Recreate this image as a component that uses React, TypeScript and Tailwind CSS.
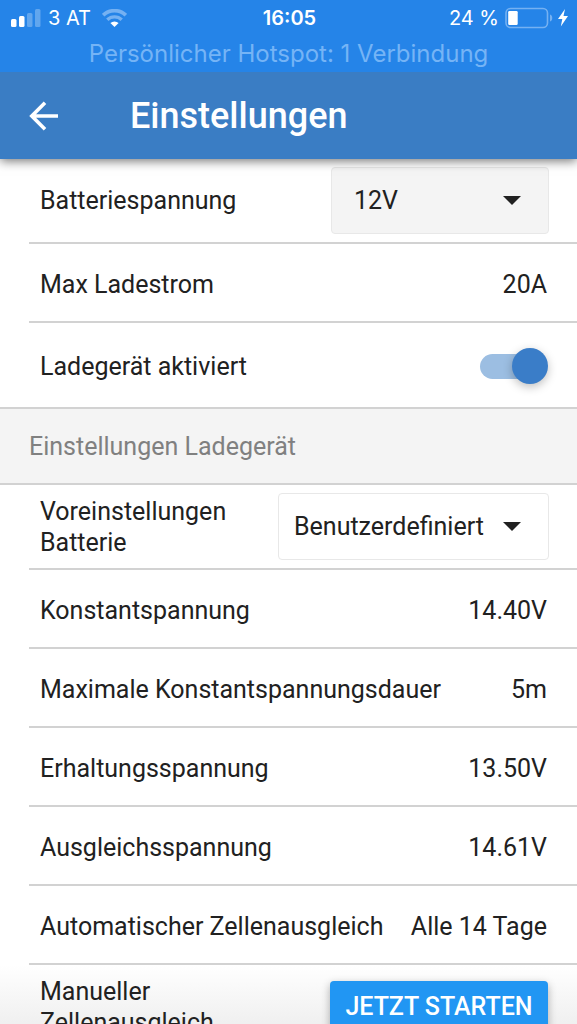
import type { ReactNode } from 'react';

function StatusBar() {
  return (
    <div className="relative z-20 bg-[#2584e8] font-['Inter','Liberation_Sans',sans-serif] text-white">
      <div className="grid h-9 grid-cols-[1fr_auto_1fr] items-center pr-2 pl-[10px] text-[20px] leading-6">
        <div className="flex items-center gap-[7px]">
          <svg className="h-[18px] w-[31px]" viewBox="0 0 31 18" fill="#fff" aria-hidden="true">
            <rect x="1" y="10" width="5.500" height="8" rx="1.5" />
            <rect x="9" y="7" width="5.500" height="11" rx="1.5" />
            <rect x="17" y="4" width="5.500" height="14" rx="1.5" opacity=".28" />
            <rect x="25" y="0" width="5.500" height="18" rx="1.5" opacity=".28" />
          </svg>
          <span className="whitespace-nowrap">3 AT</span>
          <svg className="ml-1 h-[18px] w-[25px]" viewBox="0 0 25 18" fill="none" aria-hidden="true">
            <path d="M1.2 6.2a16.2 16.2 0 0 1 22.6 0" stroke="#75b1f2" strokeWidth="3.600" />
            <path d="M5.3 10.8a10.4 10.4 0 0 1 14.4 0" stroke="#75b1f2" strokeWidth="3.400" />
            <path d="M12.5 18 8.4 14a6 6 0 0 1 8.2 0Z" fill="#fff" />
          </svg>
        </div>
        <span className="font-semibold">16:05</span>
        <div className="flex items-center justify-end gap-[6px]">
          <span className="whitespace-nowrap">24 %</span>
          <svg className="h-[22px] w-[64px]" viewBox="0 0 64 22" fill="none" aria-hidden="true">
            <rect x="1" y="1.5" width="41.5" height="19" rx="4.5" stroke="#75b1f2" strokeWidth="1.6" />
            <rect x="3.2" y="4" width="9.5" height="14" rx="1.2" fill="#fff" />
            <path d="M45 7.5c3 .8 3 6.200 0 7Z" fill="#75b1f2" />
            <path d="M60 2 53 12h4.300l-1.500 7.500L63 9h-4.500Z" fill="#fff" />
          </svg>
        </div>
      </div>
      <div className="flex h-9 items-center justify-center text-[24px] leading-8 text-[#75b4f6]">
        Persönlicher Hotspot: 1 Verbindung
      </div>
    </div>
  );
}

function Row({ label, htmlFor, size = 'h-[79px] pt-1', wrap = false, children }: {
  label: string;
  htmlFor?: string;
  size?: string;
  wrap?: boolean;
  children: ReactNode;
}) {
  const labelClass = wrap ? 'w-52' : 'whitespace-nowrap';
  return (
    <div className={`ml-[29px] flex shrink-0 items-center justify-between border-b-2 border-[#d2d2d2] pl-[11px] ${size}`}>
      {htmlFor ? (
        <label htmlFor={htmlFor} className={labelClass}>{label}</label>
      ) : (
        <span className={labelClass}>{label}</span>
      )}
      {children}
    </div>
  );
}

function Value({ children }: { children: ReactNode }) {
  return <span className="pr-[30px] whitespace-nowrap">{children}</span>;
}

function Dropdown({ id, options, look }: { id: string; options: string[]; look: string }) {
  return (
    <div className="relative mr-7">
      <select id={id} className={`block h-[67px] appearance-none rounded border border-[#e8e8e8] outline-none ${look}`}>
        {options.map((option) => (
          <option key={option}>{option}</option>
        ))}
      </select>
      <svg className="pointer-events-none absolute top-[29px] right-7 h-[9px] w-[18px]" viewBox="0 0 18 9" fill="#212121" aria-hidden="true">
        <path d="M0 0h18L9 9Z" />
      </svg>
    </div>
  );
}

export default function App() {
  return (
    <div className="flex h-screen flex-col overflow-hidden bg-white font-['Roboto','Liberation_Sans',sans-serif] text-[25px] leading-[31px] text-[#212121]">
      <StatusBar />
      <header className="relative z-10 flex h-[87px] shrink-0 items-center bg-[#3a7dc4] pl-7 text-white shadow-[0_2px_10px_rgba(0,0,0,0.55)]">
        <button type="button" aria-label="Zurück" className="flex h-9 w-[102px] items-center">
          <svg className="h-[30px] w-[31px]" viewBox="0 0 31 30" fill="none" stroke="#fff" strokeWidth="3.600" aria-hidden="true">
            <path d="M30 15H4M17 1.800 3.800 15 17 28.200" />
          </svg>
        </button>
        <h1 className="text-[36px] leading-10 font-medium">Einstellungen</h1>
      </header>
      <main className="flex min-h-0 flex-1 flex-col overflow-y-auto [scrollbar-width:none]">
        <Row label="Batteriespannung" htmlFor="voltage" size="h-[85px]">
          <Dropdown id="voltage" options={['12V', '24V']} look="w-[218px] bg-[#f4f4f4] pl-[22px]" />
        </Row>
        <Row label="Max Ladestrom"><Value>20A</Value></Row>
        <div className="flex h-[86px] shrink-0 items-center justify-between border-b-2 border-[#d2d2d2] pt-[2px] pr-[29px] pl-10">
          <label htmlFor="charger">Ladegerät aktiviert</label>
          <input
            id="charger"
            type="checkbox"
            role="switch"
            defaultChecked
            className="relative h-9 w-[68px] appearance-none before:absolute before:top-[6px] before:left-0 before:h-[25px] before:w-14 before:rounded-full before:bg-[#bdbdbd] after:absolute after:top-0 after:left-0 after:size-9 after:rounded-full after:bg-[#f5f5f5] after:shadow-[0_3px_10px_rgba(0,0,0,0.25)] checked:before:bg-[#9cbee2] checked:after:left-8 checked:after:bg-[#3a7dc8]"
          />
        </div>
        <h2 className="flex h-[76px] shrink-0 items-center border-b-2 border-[#d2d2d2] bg-[#f4f4f4] pl-[29px] text-[#808080]">
          Einstellungen Ladegerät
        </h2>
        <Row label="Voreinstellungen Batterie" htmlFor="preset" size="h-[85px]" wrap>
          <Dropdown id="preset" options={['Benutzerdefiniert', 'Normal']} look="w-[271px] bg-white pl-[15px]" />
        </Row>
        <Row label="Konstantspannung"><Value>14.40V</Value></Row>
        <Row label="Maximale Konstantspannungsdauer"><Value>5m</Value></Row>
        <Row label="Erhaltungsspannung"><Value>13.50V</Value></Row>
        <Row label="Ausgleichsspannung"><Value>14.61V</Value></Row>
        <Row label="Automatischer Zellenausgleich"><Value>Alle 14 Tage</Value></Row>
        <div className="shrink-0 bg-linear-to-b from-white to-[#e9e9e9]">
          <Row label="Manueller Zellenausgleich" size="h-[85px]" wrap>
            <button type="button" className="mr-[29px] h-[51px] w-[218px] rounded bg-[#2196f3] font-medium whitespace-nowrap text-white shadow-[0_3px_8px_rgba(0,0,0,0.3)]">
              JETZT STARTEN
            </button>
          </Row>
        </div>
      </main>
    </div>
  );
}
